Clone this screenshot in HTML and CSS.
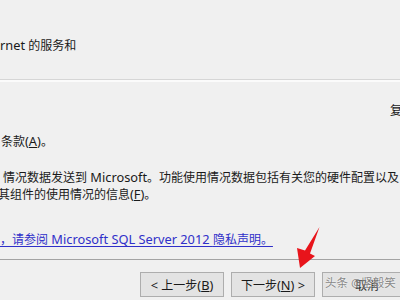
FILE: index.html
```html
<!DOCTYPE html>
<html lang="zh-CN">
<head>
<meta charset="utf-8">
<link rel="stylesheet" href="styles.css">
</head>
<body>
<div class="dialog">
  <header class="header">
    <p class="title"><span class="en">rnet </span>的服务和</p>
  </header>
  <main class="content">
    <p class="side-label"><span>复制</span></p>
    <p class="line terms">条款<span class="en">(<u>A</u>)</span>。</p>
    <p class="line para">情况数据发送到<span class="en"> Microsoft</span>。功能使用情况数据包括有关您的硬件配置以及<br><span class="cut">其组件的使用情况的信息<span class="en">(<u>F</u>)</span>。</span></p>
    <p class="line link-line"><a class="link" href="#">，请参阅<span class="en"> Microsoft SQL Server 2012 </span>隐私声明。</a></p>
  </main>
  <footer class="footer">
    <button class="btn"><span class="en">&lt; </span>上一步<span class="en">(<u>B</u>)</span></button>
    <button class="btn">下一步<span class="en">(<u>N</u>) &gt;</span></button>
    <button class="btn btn-cancel">取消</button>
  </footer>
  <svg class="arrow" width="45" height="45" viewBox="0 0 45 45" aria-hidden="true">
    <polygon points="24.5,2 15,28.5 20,31 5,43 2,23 10,25.5" fill="#e8141b"/>
  </svg>
  <div class="watermark">头条 @坚毅笑</div>
</div>
</body>
</html>
```
FILE: styles.css
```css
html, body {
  margin: 0;
  padding: 0;
}
body {
  width: 400px;
  height: 300px;
  overflow: hidden;
  background: #f0f0f0;
  font-family: "Noto Sans", "Noto Sans CJK SC", sans-serif;
  font-size: 12px;
  line-height: 16px;
  color: #1a1a1a;
}
.en {
  font-size: 12.8px;
}
.dialog {
  position: relative;
  width: 400px;
  height: 300px;
}
p {
  margin: 0;
}
.header {
  height: 80px;
  box-sizing: border-box;
  padding-top: 37px;
  border-bottom: 1px solid #d6d6d6;
}
.title {
  white-space: nowrap;
}
.content {
  height: 179px;
  box-sizing: border-box;
  border-top: 2px solid #fbfbfb;
  padding-top: 21px;
  white-space: nowrap;
}
.side-label {
  display: flex;
  justify-content: flex-end;
  margin-right: -14px;
}
.terms {
  margin-top: 14px;
  padding-left: 1px;
}
.para {
  margin-top: 19px;
  padding-left: 3px;
}
.cut {
  margin-left: -5px;
}
.link-line {
  margin-top: 28px;
}
.link {
  color: #2f2fc9;
  text-decoration: underline;
  text-underline-offset: 2px;
}
.footer {
  height: 41px;
  box-sizing: border-box;
  border-top: 1px solid #a3a3a3;
  padding-top: 12px;
  display: flex;
  justify-content: flex-end;
  gap: 7px;
  margin-right: -6px;
}
.btn {
  width: 84px;
  height: 25px;
  flex: none;
  box-sizing: border-box;
  border: 1px solid #adadad;
  background: #e3e3e3;
  font-family: inherit;
  font-size: 12px;
  color: #1a1a1a;
  padding: 0;
}
.btn-cancel {
  padding-left: 6px;
}
.arrow {
  position: absolute;
  left: 295px;
  top: 225px;
}
.watermark {
  position: absolute;
  left: 325px;
  top: 276px;
  font-size: 11.5px;
  line-height: 14px;
  color: rgba(85, 85, 85, 0.7);
  text-shadow: 0 0 2px #fff;
  white-space: nowrap;
}
```
